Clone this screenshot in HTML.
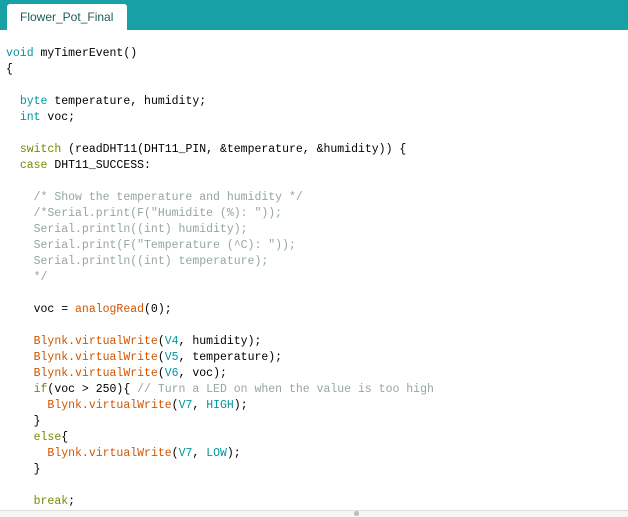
<!DOCTYPE html>
<html><head><meta charset="utf-8"><style>
html,body{margin:0;padding:0;background:#fff;width:628px;height:517px;overflow:hidden;position:relative}
.bar{position:absolute;left:0;top:0;width:628px;height:30px;background:#17a1a5}
.tab{position:absolute;left:7px;top:4px;width:120px;height:26px;background:#fff;border-radius:3px 3px 0 0;font:12px "Liberation Sans",sans-serif;color:#1e5c5e;line-height:27px;text-indent:13px}
pre{position:absolute;left:6px;top:46px;margin:0;font:11.5px/16px "Liberation Mono",monospace;color:#000}
.k{color:#00979c}.f{color:#d35400}.c{color:#95a5a6}.o{color:#728e00}
.sb{position:absolute;left:0;top:510px;width:628px;height:7px;background:#f5f5f5;border-top:1px solid #ddd}
.dot{position:absolute;left:354px;top:511px;width:5px;height:5px;border-radius:3px;background:#bbb}
</style></head><body>
<div class="bar"><div class="tab">Flower_Pot_Final</div></div>
<pre><span class="k">void</span> myTimerEvent()
{

  <span class="k">byte</span> temperature, humidity;
  <span class="k">int</span> voc;

  <span class="o">switch</span> (readDHT11(DHT11_PIN, &amp;temperature, &amp;humidity)) {
  <span class="o">case</span> DHT11_SUCCESS:

    <span class="c">/* Show the temperature and humidity */</span>
<span class="c">    /*Serial.print(F("Humidite (%): "));
    Serial.println((int) humidity);
    Serial.print(F("Temperature (^C): "));
    Serial.println((int) temperature);
    */</span>

    voc = <span class="f">analogRead</span>(0);

    <span class="f">Blynk.virtualWrite</span>(<span class="k">V4</span>, humidity);
    <span class="f">Blynk.virtualWrite</span>(<span class="k">V5</span>, temperature);
    <span class="f">Blynk.virtualWrite</span>(<span class="k">V6</span>, voc);
    <span class="o">if</span>(voc &gt; 250){ <span class="c">// Turn a LED on when the value is too high</span>
      <span class="f">Blynk.virtualWrite</span>(<span class="k">V7</span>, <span class="k">HIGH</span>);
    }
    <span class="o">else</span>{
      <span class="f">Blynk.virtualWrite</span>(<span class="k">V7</span>, <span class="k">LOW</span>);
    }

    <span class="o">break</span>;</pre>
<div class="sb"></div><div class="dot"></div>
</body></html>
